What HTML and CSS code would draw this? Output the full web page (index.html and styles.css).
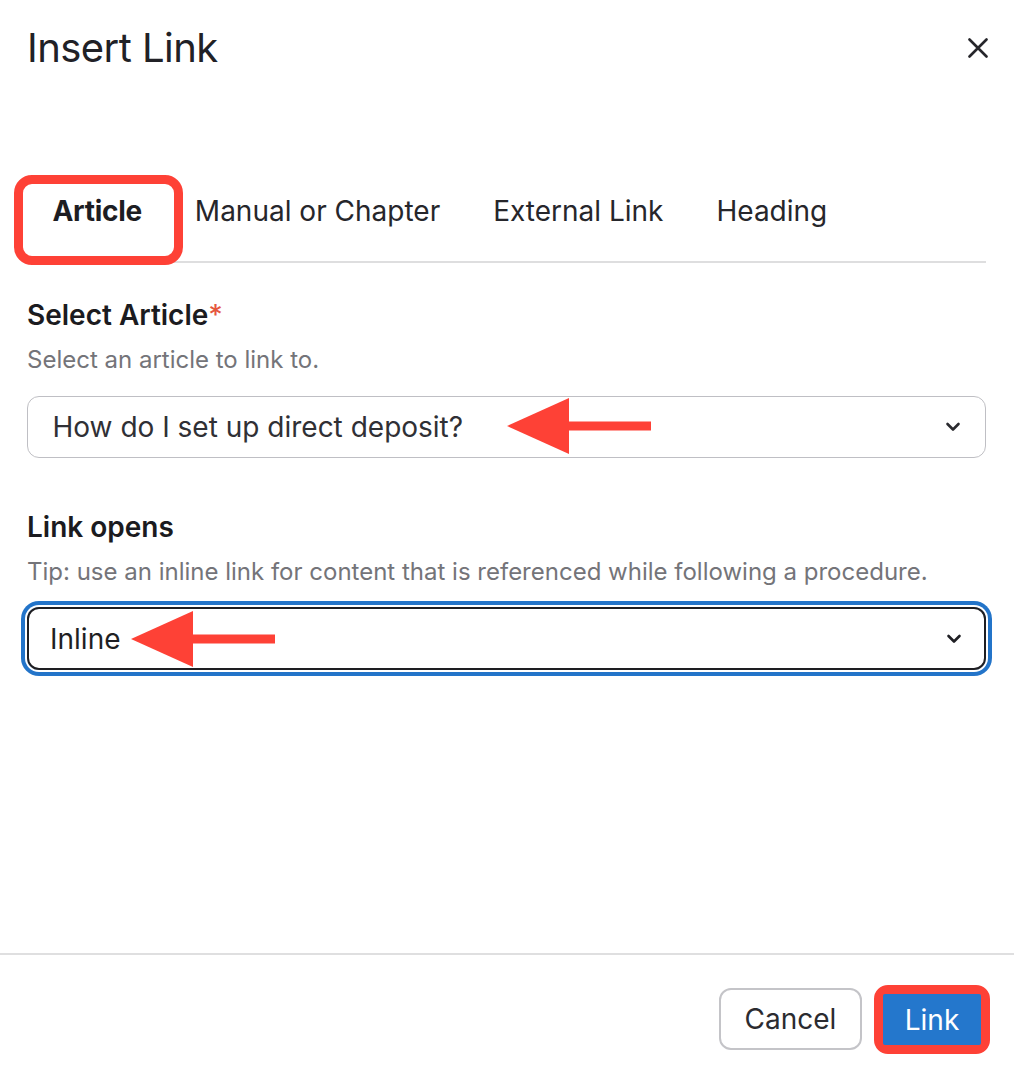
FILE: index.html
```html
<!DOCTYPE html>
<html lang="en">
<head>
<meta charset="utf-8">
<title>Insert Link</title>
<link rel="stylesheet" href="styles.css">
</head>
<body>
<div class="dialog">
  <header class="head">
    <h1 class="title">Insert Link</h1>
    <button class="close" aria-label="Close">
      <svg width="20" height="20" viewBox="0 0 20 20"><path d="M1.5 1.5 L18.5 18.5 M18.5 1.5 L1.5 18.5" stroke="#26262b" stroke-width="2.6" stroke-linecap="round" fill="none"/></svg>
    </button>
  </header>

  <main class="body">
    <nav class="tabs">
      <div class="tab active">Article<span class="mark-tab"></span></div>
      <div class="tab">Manual or Chapter</div>
      <div class="tab">External Link</div>
      <div class="tab">Heading</div>
    </nav>

    <section class="field first">
      <div class="label">Select Article<span class="req">*</span></div>
      <div class="help">Select an article to link to.</div>
      <div class="select">
        <span class="value">How do I set up direct deposit?</span>
        <svg class="chev" width="16" height="10" viewBox="0 0 16 10"><path d="M2.5 2 L8 7.5 L13.5 2" stroke="#2a2a2f" stroke-width="2.6" stroke-linecap="round" stroke-linejoin="round" fill="none"/></svg>
        <svg class="arrow a1" width="144" height="56" viewBox="0 0 144 56"><polygon points="0,28 62,0 62,56" fill="#fe4136"/><rect x="61" y="23.5" width="83" height="9" fill="#fe4136"/></svg>
      </div>
    </section>

    <section class="field second">
      <div class="label">Link opens</div>
      <div class="help">Tip: use an inline link for content that is referenced while following a procedure.</div>
      <div class="select focus">
        <span class="value">Inline</span>
        <svg class="chev" width="16" height="10" viewBox="0 0 16 10"><path d="M2.5 2 L8 7.5 L13.5 2" stroke="#1f1f24" stroke-width="2.6" stroke-linecap="round" stroke-linejoin="round" fill="none"/></svg>
        <svg class="arrow a2" width="144" height="56" viewBox="0 0 144 56"><polygon points="0,28 62,0 62,56" fill="#fe4136"/><rect x="61" y="23.5" width="83" height="9" fill="#fe4136"/></svg>
      </div>
    </section>
  </main>

  <footer class="foot">
    <button class="btn cancel">Cancel</button>
    <div class="mark-btn"><button class="btn primary">Link</button></div>
  </footer>
</div>
</body>
</html>
```

FILE: styles.css
```css
* { box-sizing: border-box; }

html, body {
  margin: 0;
  padding: 0;
  background: #ffffff;
}

body {
  font-family: Inter, "Noto Sans", "Liberation Sans", sans-serif;
  color: #222227;
}

.dialog {
  width: 1014px;
  height: 1066px;
  display: flex;
  flex-direction: column;
}

.head {
  display: flex;
  justify-content: space-between;
  align-items: center;
  padding: 24px 26px 0 27px;
}

.title {
  margin: 0;
  font-size: 40px;
  line-height: 48px;
  font-weight: 400;
  letter-spacing: -0.55px;
  color: #212126;
}

.close {
  border: 0;
  background: none;
  padding: 0;
  width: 20px;
  height: 20px;
  display: flex;
}

.body {
  padding: 0 28px 0 27px;
  flex: 1;
}

.tabs {
  display: flex;
  margin-top: 123px;
  margin-left: -1px;
  border-bottom: 2px solid #dededf;
}

.tab {
  position: relative;
  font-size: 28px;
  line-height: 32px;
  padding: 0 26.5px 34px;
  color: #26262b;
}

.tab.active {
  font-weight: 700;
  letter-spacing: -0.3px;
  color: #1d1d22;
}

.mark-tab {
  position: absolute;
  left: -12px;
  top: -20px;
  width: 169px;
  height: 90px;
  border: 9px solid #fe4136;
  border-radius: 18px;
}

.field.first { margin-top: 36px; }
.field.second { margin-top: 53px; }

.label {
  font-size: 28px;
  line-height: 32px;
  font-weight: 600;
  color: #1b1b20;
}

.req {
  color: #e5573e;
  font-weight: 500;
}

.help {
  margin-top: 14px;
  font-size: 24px;
  line-height: 30px;
  color: #747479;
}

.select {
  position: relative;
  margin-top: 21px;
  height: 62px;
  border: 1.5px solid #bfbfc4;
  border-radius: 12px;
  padding: 0 24.5px 0 24.5px;
  display: flex;
  align-items: center;
  justify-content: space-between;
  font-size: 28px;
  color: #303035;
}

.select.focus {
  margin-top: 20px;
  height: 63px;
  border: 2px solid #1e1e22;
  padding: 0 22px 0 21px;
  color: #1f1f24;
  box-shadow: 0 0 0 2px #ffffff, 0 0 0 6px #2374c9;
}

.chev { display: block; }

.arrow {
  position: absolute;
}

.arrow.a1 { left: 478.5px; top: 0.5px; }
.arrow.a2 { left: 102px; top: 2px; }

.foot {
  border-top: 2px solid #dfdfe0;
  display: flex;
  justify-content: flex-end;
  align-items: flex-start;
  gap: 12px;
  padding: 30px 24px 0 0;
  height: 113px;
}

.btn {
  font-family: inherit;
  font-size: 28px;
  margin: 0;
}

.cancel {
  margin-top: 3px;
  height: 62px;
  padding: 0 20px;
  width: 143px;
  background: #ffffff;
  border: 2px solid #c4c4c8;
  border-radius: 12px;
  color: #2b2b30;
}

.mark-btn {
  border: 9px solid #fe4136;
  border-radius: 14px;
  display: flex;
}

.primary {
  width: 98px;
  height: 51px;
  padding: 0;
  border: 0;
  border-radius: 2px;
  background: #2477cc;
  color: #ffffff;
}
```
